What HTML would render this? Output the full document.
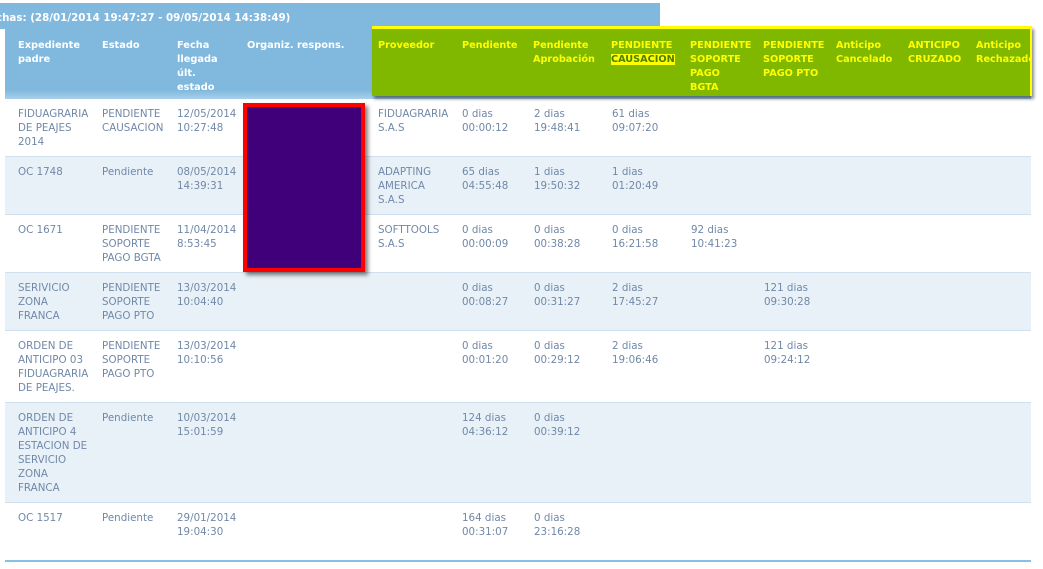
<!DOCTYPE html>
<html><head><meta charset="utf-8"><style>
*{margin:0;padding:0;box-sizing:border-box}
body{width:1043px;height:569px;background:#fff;position:relative;overflow:hidden;font-family:"DejaVu Sans","Liberation Sans",sans-serif;font-size:10.3px;line-height:14px;color:#7088a8}
.a{position:absolute;white-space:nowrap}
.title{left:0;top:3px;width:660px;height:26px;background:#80b8de;color:#fff;font-weight:bold;font-size:10.3px;padding:8px 0 0 0;text-indent:-4px}
.hdr{left:5px;top:28px;width:1026px;height:71px;background:linear-gradient(#80b8de 0,#80b8de 62px,#a8d0ea 71px)}
.hdr .h{position:absolute;top:11px;color:#fff;font-weight:bold;font-size:9.8px;line-height:14px;white-space:nowrap}
.green{left:372px;top:26px;width:660px;height:70px;background:#80b800;border-top:3px solid #ffff00;border-right:2px solid #ffff00;box-shadow:2px 3px 3px rgba(0,0,0,.45)}
.green .h{position:absolute;top:10px;color:#ffff00;font-weight:bold;font-size:9.7px;line-height:14px;white-space:nowrap}
.row{position:absolute;left:5px;width:1026px;border-bottom:1px solid #d0e0ee}
.alt{background:#e9f1f8}
.c{position:absolute;white-space:nowrap}
.purple{left:243px;top:103px;width:122px;height:169px;background:#40007a;border:4px solid #ff0000;box-shadow:3px 3px 4px rgba(0,0,0,.5)}
</style></head><body>
<div class="a title">chas: (28/01/2014 19:47:27 - 09/05/2014 14:38:49)</div>
<div class="a hdr">
<div class="h" style="left:13px">Expediente<br>padre</div>
<div class="h" style="left:97px">Estado</div>
<div class="h" style="left:172px">Fecha<br>llegada<br>últ.<br>estado</div>
<div class="h" style="left:242px">Organiz. respons.</div>
</div>
<div class="a green">
<div class="h" style="left:6px">Proveedor</div>
<div class="h" style="left:90px">Pendiente</div>
<div class="h" style="left:161px">Pendiente<br>Aprobación</div>
<div class="h" style="left:239px">PENDIENTE<br><span style="background:#ffff00;color:#4a8000">CAUSACION</span></div>
<div class="h" style="left:318px">PENDIENTE<br>SOPORTE<br>PAGO<br>BGTA</div>
<div class="h" style="left:391px">PENDIENTE<br>SOPORTE<br>PAGO PTO</div>
<div class="h" style="left:464px">Anticipo<br>Cancelado</div>
<div class="h" style="left:536px">ANTICIPO<br>CRUZADO</div>
<div class="h" style="left:604px;width:54px;overflow:hidden">Anticipo<br>Rechazado</div>
</div>

<div class="row" style="top:98px;height:59px"></div>
<div class="row alt" style="top:157px;height:58px"></div>
<div class="row" style="top:215px;height:58px"></div>
<div class="row alt" style="top:273px;height:58px"></div>
<div class="row" style="top:331px;height:72px"></div>
<div class="row alt" style="top:403px;height:100px"></div>
<div class="row" style="top:503px;height:59px;border-bottom:2px solid #88c0e4"></div>

<div class="c" style="left:18px;top:107px">FIDUAGRARIA<br>DE PEAJES<br>2014</div>
<div class="c" style="left:102px;top:107px">PENDIENTE<br>CAUSACION</div>
<div class="c" style="left:177px;top:107px">12/05/2014<br>10:27:48</div>
<div class="c" style="left:378px;top:107px">FIDUAGRARIA<br>S.A.S</div>
<div class="c" style="left:462px;top:107px">0 dias<br>00:00:12</div>
<div class="c" style="left:534px;top:107px">2 dias<br>19:48:41</div>
<div class="c" style="left:612px;top:107px">61 dias<br>09:07:20</div>

<div class="c" style="left:18px;top:165px">OC 1748</div>
<div class="c" style="left:102px;top:165px">Pendiente</div>
<div class="c" style="left:177px;top:165px">08/05/2014<br>14:39:31</div>
<div class="c" style="left:378px;top:165px">ADAPTING<br>AMERICA<br>S.A.S</div>
<div class="c" style="left:462px;top:165px">65 dias<br>04:55:48</div>
<div class="c" style="left:534px;top:165px">1 dias<br>19:50:32</div>
<div class="c" style="left:612px;top:165px">1 dias<br>01:20:49</div>

<div class="c" style="left:18px;top:223px">OC 1671</div>
<div class="c" style="left:102px;top:223px">PENDIENTE<br>SOPORTE<br>PAGO BGTA</div>
<div class="c" style="left:177px;top:223px">11/04/2014<br>8:53:45</div>
<div class="c" style="left:378px;top:223px">SOFTTOOLS<br>S.A.S</div>
<div class="c" style="left:462px;top:223px">0 dias<br>00:00:09</div>
<div class="c" style="left:534px;top:223px">0 dias<br>00:38:28</div>
<div class="c" style="left:612px;top:223px">0 dias<br>16:21:58</div>
<div class="c" style="left:691px;top:223px">92 dias<br>10:41:23</div>

<div class="c" style="left:18px;top:281px">SERIVICIO<br>ZONA<br>FRANCA</div>
<div class="c" style="left:102px;top:281px">PENDIENTE<br>SOPORTE<br>PAGO PTO</div>
<div class="c" style="left:177px;top:281px">13/03/2014<br>10:04:40</div>
<div class="c" style="left:462px;top:281px">0 dias<br>00:08:27</div>
<div class="c" style="left:534px;top:281px">0 dias<br>00:31:27</div>
<div class="c" style="left:612px;top:281px">2 dias<br>17:45:27</div>
<div class="c" style="left:764px;top:281px">121 dias<br>09:30:28</div>

<div class="c" style="left:18px;top:339px">ORDEN DE<br>ANTICIPO 03<br>FIDUAGRARIA<br>DE PEAJES.</div>
<div class="c" style="left:102px;top:339px">PENDIENTE<br>SOPORTE<br>PAGO PTO</div>
<div class="c" style="left:177px;top:339px">13/03/2014<br>10:10:56</div>
<div class="c" style="left:462px;top:339px">0 dias<br>00:01:20</div>
<div class="c" style="left:534px;top:339px">0 dias<br>00:29:12</div>
<div class="c" style="left:612px;top:339px">2 dias<br>19:06:46</div>
<div class="c" style="left:764px;top:339px">121 dias<br>09:24:12</div>

<div class="c" style="left:18px;top:411px">ORDEN DE<br>ANTICIPO 4<br>ESTACION DE<br>SERVICIO<br>ZONA<br>FRANCA</div>
<div class="c" style="left:102px;top:411px">Pendiente</div>
<div class="c" style="left:177px;top:411px">10/03/2014<br>15:01:59</div>
<div class="c" style="left:462px;top:411px">124 dias<br>04:36:12</div>
<div class="c" style="left:534px;top:411px">0 dias<br>00:39:12</div>

<div class="c" style="left:18px;top:511px">OC 1517</div>
<div class="c" style="left:102px;top:511px">Pendiente</div>
<div class="c" style="left:177px;top:511px">29/01/2014<br>19:04:30</div>
<div class="c" style="left:462px;top:511px">164 dias<br>00:31:07</div>
<div class="c" style="left:534px;top:511px">0 dias<br>23:16:28</div>

<div class="a purple"></div>
</body></html>
